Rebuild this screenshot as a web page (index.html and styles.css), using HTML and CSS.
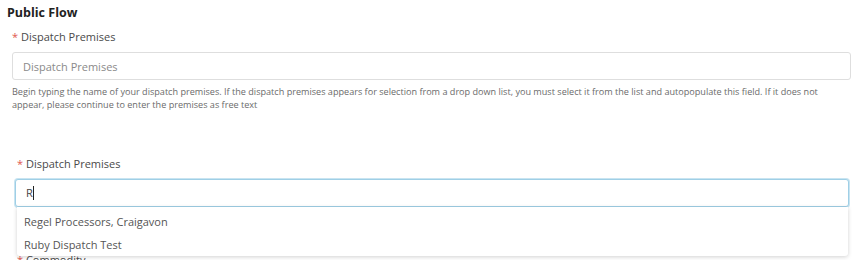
FILE: index.html
```html
<!DOCTYPE html>
<html lang="en">
<head>
    <meta charset="UTF-8">
    <meta name="viewport" content="width=device-width, initial-scale=1.0">
    <title>Public Flow</title>
    <link rel="stylesheet" href="styles.css">
</head>
<body>
    <div class="page">
        <h3 class="title">Public Flow</h3>

        <div class="form-group first">
            <label for="premises-1"><span class="req">*</span> Dispatch Premises</label>
            <input type="text" id="premises-1" placeholder="Dispatch Premises">
            <p class="help">Begin typing the name of your dispatch premises. If the dispatch premises appears for selection from a drop down list, you must select it from the list and autopopulate this field. If it does not appear, please continue to enter the premises as free text</p>
        </div>

        <div class="form-group second">
            <label for="premises-2"><span class="req">*</span> Dispatch Premises</label>
            <div class="autocomplete">
                <div class="input-focus">R<span class="caret"></span></div>
                <ul class="suggestions">
                    <li>Regel Processors, Craigavon</li>
                    <li>Ruby Dispatch Test</li>
                </ul>
            </div>
            <label class="next-label"><span class="req">*</span> Commodity</label>
        </div>
    </div>
</body>
</html>
```

FILE: styles.css
```css
body {
    font-family: "Open Sans", Arial, sans-serif;
    background-color: #fff;
    color: #444;
    margin: 0;
    padding: 0;
}

.page {
    height: 260px;
    overflow: hidden;
}

.title {
    margin: 0;
    padding: 4px 0 0 7px;
    font-size: 12.5px;
    font-weight: bold;
    color: #222;
    line-height: 18px;
}

.form-group label {
    display: block;
    font-size: 11px;
    line-height: 16px;
    color: #4a4a4a;
}

.req {
    color: #e0584f;
}

.first {
    padding: 7px 3px 0 12px;
}

.first label {
    margin-bottom: 7px;
}

.first input {
    display: block;
    width: 100%;
    height: 28px;
    box-sizing: border-box;
    border: 1px solid #dedede;
    border-radius: 3px;
    padding: 0 10px;
    font-family: inherit;
    font-size: 11px;
    color: #444;
}

.first input::placeholder {
    color: #8a8a8a;
}

.help {
    margin: 5px 0 0;
    font-size: 9.1px;
    line-height: 13px;
    color: #6b6b6b;
}

.second {
    padding: 45px 5px 0 15px;
}

.second label {
    padding-left: 2px;
    margin-bottom: 7px;
}

.autocomplete {
    position: relative;
    z-index: 2;
}

.input-focus {
    height: 28px;
    box-sizing: border-box;
    border: 1px solid #9fcfe6;
    border-radius: 3px;
    box-shadow: 0 0 0 1px #c8e4f1;
    padding: 0 10px;
    font-size: 11px;
    line-height: 26px;
    color: #444;
    background-color: #fff;
}

.caret {
    display: inline-block;
    width: 1px;
    height: 14px;
    background-color: #222;
    vertical-align: -3px;
}

.suggestions {
    position: absolute;
    top: 28px;
    left: 2px;
    right: 1px;
    margin: 0;
    padding: 3px 0 0;
    list-style: none;
    background-color: #fff;
    box-shadow: 0 1px 4px rgba(0, 0, 0, 0.18);
    border-radius: 0 0 3px 3px;
}

.suggestions li {
    font-size: 11px;
    line-height: 23px;
    padding: 0 7px;
    color: #555;
}

.next-label {
    margin-top: 45px;
}
```
